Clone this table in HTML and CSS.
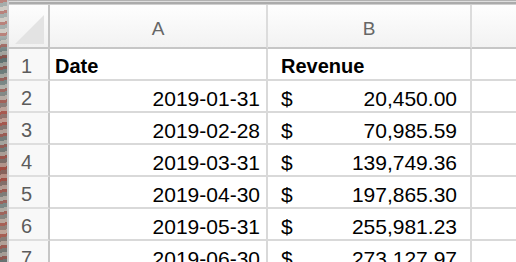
FILE: index.html
```html
<!DOCTYPE html>
<html>
<head>
<meta charset="utf-8">
<link rel="stylesheet" href="styles.css">
</head>
<body>
<div class="window">
  <div class="desk"></div>
  <div class="sheet">
    <div class="grid">
      <div class="cell corner"><span class="tri"></span></div>
      <div class="cell colhead">A</div>
      <div class="cell colhead">B</div>
      <div class="cell colhead last"></div>

      <div class="cell rowhead">1</div>
      <div class="cell txt bold">Date</div>
      <div class="cell txt acc bold">Revenue</div>
      <div class="cell last"></div>

      <div class="cell rowhead">2</div>
      <div class="cell num">2019-01-31</div>
      <div class="cell money"><span>$</span><span>20,450.00</span></div>
      <div class="cell last"></div>

      <div class="cell rowhead">3</div>
      <div class="cell num">2019-02-28</div>
      <div class="cell money"><span>$</span><span>70,985.59</span></div>
      <div class="cell last"></div>

      <div class="cell rowhead">4</div>
      <div class="cell num">2019-03-31</div>
      <div class="cell money"><span>$</span><span>139,749.36</span></div>
      <div class="cell last"></div>

      <div class="cell rowhead">5</div>
      <div class="cell num">2019-04-30</div>
      <div class="cell money"><span>$</span><span>197,865.30</span></div>
      <div class="cell last"></div>

      <div class="cell rowhead">6</div>
      <div class="cell num">2019-05-31</div>
      <div class="cell money"><span>$</span><span>255,981.23</span></div>
      <div class="cell last"></div>

      <div class="cell rowhead">7</div>
      <div class="cell num">2019-06-30</div>
      <div class="cell money"><span>$</span><span>273,127.97</span></div>
      <div class="cell last"></div>
    </div>
  </div>
</div>
</body>
</html>
```

FILE: styles.css
```css
html, body {
  margin: 0;
  padding: 0;
  background: #ffffff;
  overflow: hidden;
}
body {
  width: 516px;
  height: 262px;
  font-family: "Liberation Sans", Arial, sans-serif;
}
.window {
  display: flex;
  width: 516px;
  height: 262px;
  overflow: hidden;
}
.desk {
  width: 7px;
  flex: none;
  background:
    repeating-linear-gradient(170deg, rgba(160,60,50,0.55) 0 3px, rgba(90,110,110,0.4) 3px 7px, rgba(200,190,180,0.5) 7px 11px),
    linear-gradient(180deg, #d8d8d4 0 14%, #5f6f6e 22%, #9aa3a0 34%, #b7746a 45%, #7d8a87 55%, #a55a4f 66%, #8e9a96 78%, #b98a7c 88%, #6e7674 100%);
}
.sheet {
  flex: 1;
  border-left: 2px solid #c9c9c9;
  border-top: 1px solid #b2b2b2;
  box-shadow: inset 0 1px 0 #dedede, inset 0 3px 0 #ababab, inset 0 4px 0 #cfcfcf;
  padding-top: 4px;
  background: #ffffff;
}
.grid {
  display: grid;
  grid-template-columns: 41px 218px 204px 1fr;
  grid-template-rows: 44px repeat(7, 32px);
}
.cell {
  box-sizing: border-box;
  border-right: 2px solid #d9d9d9;
  border-bottom: 2px solid #d9d9d9;
  display: flex;
  align-items: center;
  white-space: nowrap;
  overflow: hidden;
}
.cell.last {
  border-right: none;
}
.corner {
  background: linear-gradient(180deg, #fdfdfd, #f1f1f1);
  border-right-color: #c6c6c6;
  border-bottom-color: #c6c6c6;
  padding: 10px 4px 3px 6px;
  align-items: stretch;
}
.tri {
  flex: 1;
  background: #e3e3e3;
  clip-path: polygon(100% 0, 100% 100%, 0 100%);
}
.colhead {
  background: linear-gradient(180deg, #fefefe, #f2f2f2);
  border-bottom-color: #c6c6c6;
  border-right-color: #dcdcdc;
  justify-content: center;
  color: #666666;
  font-size: 19px;
  padding-top: 6px;
}
.rowhead {
  background: #f8f8f8;
  border-right-color: #c6c6c6;
  border-bottom-color: #dedede;
  justify-content: center;
  color: #5c5c5c;
  font-size: 20px;
  padding-top: 5px;
  padding-right: 4px;
}
.txt {
  color: #000;
  font-size: 20px;
  padding-left: 5px;
  padding-top: 5px;
}
.txt.acc {
  padding-left: 13px;
}
.bold {
  font-weight: bold;
}
.num {
  justify-content: flex-end;
  font-size: 21px;
  color: #000;
  padding-right: 6px;
  padding-top: 5px;
}
.money {
  justify-content: space-between;
  font-size: 21px;
  color: #000;
  padding: 5px 13px 0 13px;
}
```
